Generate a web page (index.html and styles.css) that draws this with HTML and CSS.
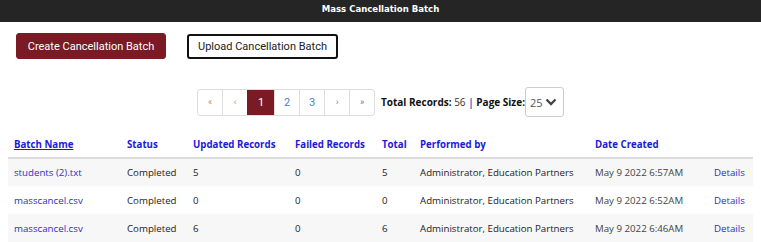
FILE: index.html
```html
<!DOCTYPE html>
<html lang="en">
<head>
  <meta charset="UTF-8">
  <title>Mass Cancellation Batch</title>
  <link rel="stylesheet" href="styles.css">
</head>
<body>
  <header class="title-bar">
    <h1>Mass Cancellation Batch</h1>
  </header>

  <!-- Actions -->
  <section class="actions">
    <button class="btn btn-primary">Create Cancellation Batch</button>
    <button class="btn btn-outline">Upload Cancellation Batch</button>
  </section>

  <!-- Pager -->
  <section class="pager-row">
    <ul class="pager">
      <li class="pg-edge">&laquo;</li>
      <li class="pg-edge">&lsaquo;</li>
      <li class="active">1</li>
      <li>2</li>
      <li>3</li>
      <li class="pg-arrow">&rsaquo;</li>
      <li class="pg-arrow">&raquo;</li>
    </ul>
    <div class="totals">Total Records: <span class="num">56</span> <span class="sep">|</span> Page Size:</div>
    <div class="page-size">
      <span>25</span>
      <svg width="12" height="8" viewBox="0 0 12 8"><path d="M1.5 1.5 L6 6 L10.5 1.5" fill="none" stroke="#444" stroke-width="2.4"/></svg>
    </div>
  </section>

  <!-- Batches -->
  <table class="batches">
    <thead>
      <tr>
        <th class="c-name"><a href="#">Batch Name</a></th>
        <th class="c-status">Status</th>
        <th class="c-upd">Updated Records</th>
        <th class="c-fail">Failed Records</th>
        <th class="c-total">Total</th>
        <th class="c-by">Performed by</th>
        <th class="c-date">Date Created</th>
        <th class="c-link"></th>
      </tr>
    </thead>
    <tbody>
      <tr>
        <td><a href="#">students (2).txt</a></td>
        <td>Completed</td>
        <td>5</td>
        <td>0</td>
        <td>5</td>
        <td>Administrator, Education Partners</td>
        <td class="date">May 9 2022 6:57AM</td>
        <td><a href="#">Details</a></td>
      </tr>
      <tr>
        <td><a href="#">masscancel.csv</a></td>
        <td>Completed</td>
        <td>0</td>
        <td>0</td>
        <td>0</td>
        <td>Administrator, Education Partners</td>
        <td class="date">May 9 2022 6:52AM</td>
        <td><a href="#">Details</a></td>
      </tr>
      <tr>
        <td><a href="#">masscancel.csv</a></td>
        <td>Completed</td>
        <td>6</td>
        <td>0</td>
        <td>6</td>
        <td>Administrator, Education Partners</td>
        <td class="date">May 9 2022 6:46AM</td>
        <td><a href="#">Details</a></td>
      </tr>
    </tbody>
  </table>
</body>
</html>
```

FILE: styles.css
```css
body {
  margin: 0;
  font-family: "Open Sans", "Noto Sans", sans-serif;
  background: #fff;
  color: #222;
}
.title-bar {
  background: #252525;
  height: 22px;
  display: flex;
  align-items: center;
  justify-content: center;
}
.title-bar h1 {
  margin: 0;
  color: #fff;
  font-family: "DejaVu Sans Condensed", "DejaVu Sans", sans-serif;
  font-stretch: condensed;
  font-size: 9.5px;
  font-weight: bold;
  position: relative;
  top: -3px;
}
.actions {
  display: flex;
  gap: 21px;
  padding: 11px 16px 0;
}
.btn {
  font-family: Roboto, sans-serif;
  font-size: 11px;
  height: 26px;
  border-radius: 3px;
  padding: 0;
  white-space: nowrap;
  cursor: pointer;
}
.btn-primary {
  width: 150px;
  background: #7a1a24;
  color: #fff;
  border: 1px solid #7a1a24;
}
.btn-outline {
  width: 151px;
  height: 25px;
  margin-top: 1px;
  background: #fff;
  color: #222;
  border: 2px solid #111;
}
.pager-row {
  display: flex;
  align-items: center;
  padding: 28px 0 0 197px;
}
.pager {
  list-style: none;
  margin: 0;
  padding: 0;
  display: flex;
  border: 1px solid #ddd;
  border-radius: 3px;
  font-family: Roboto, sans-serif;
}
.pager li {
  width: 24px;
  height: 25px;
  display: flex;
  align-items: center;
  justify-content: center;
  font-size: 11px;
  color: #4a80c8;
  border-left: 1px solid #ddd;
}
.pager li:first-child {
  border-left: none;
}
.pager .pg-edge {
  color: #c98a5a;
  font-size: 9px;
}
.pager .pg-arrow {
  font-size: 9px;
}
.pager .active {
  width: 26px;
  background: #7a1a24;
  color: #fff;
  border-left-color: #7a1a24;
}
.totals {
  margin-left: 6px;
  font-family: "Open Sans", sans-serif;
  font-size: 10px;
  font-weight: bold;
  color: #111;
}
.totals .num {
  font-weight: normal;
  color: #333;
}
.totals .sep {
  color: #2a6eb8;
}
.page-size {
  margin-left: 0;
  width: 39px;
  height: 30px;
  box-sizing: border-box;
  border: 1px solid #ccc;
  border-radius: 3px;
  display: flex;
  align-items: center;
  justify-content: space-between;
  padding: 0 6px 0 4px;
  font-family: "Open Sans", sans-serif;
  font-size: 11px;
  color: #555;
}
.batches {
  margin: 20px 8px 0;
  width: 745px;
  border-collapse: collapse;
  font-size: 9.7px;
}
.batches th {
  text-align: left;
  font-weight: bold;
  color: #1a1ad8;
  padding: 0 6px 5px;
  height: 15px;
  border-bottom: 2px solid #ddd;
  white-space: nowrap;
}
.batches th a {
  color: #1a1ad8;
}
.batches td {
  padding: 0 6px;
  height: 27px;
  white-space: nowrap;
  color: #222;
}
.batches tbody tr + tr td {
  height: 28px;
}
.batches td.date {
  color: #444;
}
.batches tbody tr:nth-child(odd) {
  background: #f7f7f7;
}
.batches a {
  color: #2d2dcc;
  text-decoration: none;
}
.batches th a {
  text-decoration: underline;
}
.c-name { width: 101px; }
.c-status { width: 54px; }
.c-upd { width: 90px; }
.c-fail { width: 75px; }
.c-total { width: 26px; }
.c-by { width: 163px; }
.c-date { width: 107px; }
```
